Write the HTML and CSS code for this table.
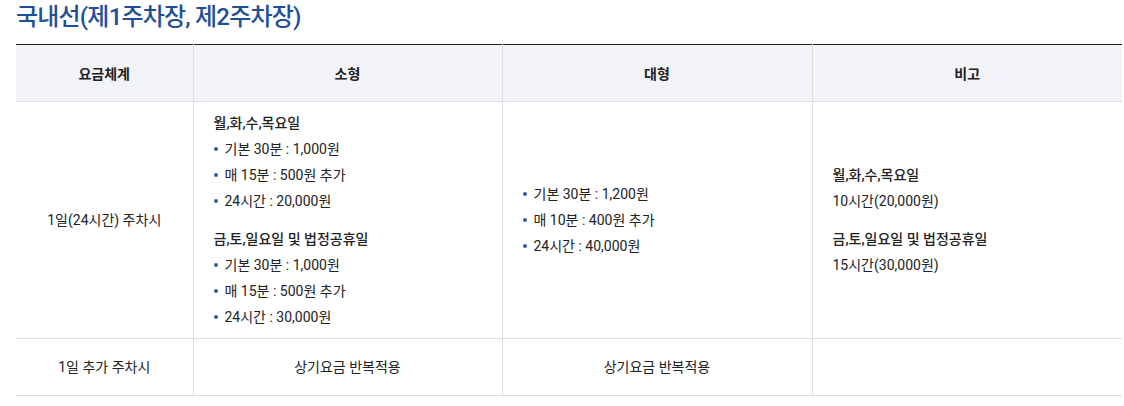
FILE: index.html
```html
<!DOCTYPE html>
<html lang="ko">
<head>
<meta charset="utf-8">
<link rel="stylesheet" href="styles.css">
</head>
<body>
<div class="page">
  <h2 class="title">국내선(제1주차장, 제2주차장)</h2>
  <table class="fee">
    <colgroup>
      <col class="c1"><col class="c2"><col class="c3"><col class="c4">
    </colgroup>
    <thead>
      <tr><th>요금체계</th><th>소형</th><th>대형</th><th>비고</th></tr>
    </thead>
    <tbody>
      <tr class="main">
        <td class="center">1일(24시간) 주차시</td>
        <td class="left">
          <p class="head">월,화,수,목요일</p>
          <ul class="dots">
            <li>기본 30분 : 1,000원</li>
            <li>매 15분 : 500원 추가</li>
            <li>24시간 : 20,000원</li>
          </ul>
          <p class="head gap">금,토,일요일 및 법정공휴일</p>
          <ul class="dots">
            <li>기본 30분 : 1,000원</li>
            <li>매 15분 : 500원 추가</li>
            <li>24시간 : 30,000원</li>
          </ul>
        </td>
        <td class="left">
          <ul class="dots">
            <li>기본 30분 : 1,200원</li>
            <li>매 10분 : 400원 추가</li>
            <li>24시간 : 40,000원</li>
          </ul>
        </td>
        <td class="left">
          <p class="head">월,화,수,목요일</p>
          <p>10시간(20,000원)</p>
          <p class="head gap">금,토,일요일 및 법정공휴일</p>
          <p>15시간(30,000원)</p>
        </td>
      </tr>
      <tr class="extra">
        <td class="center">1일 추가 주차시</td>
        <td class="center">상기요금 반복적용</td>
        <td class="center">상기요금 반복적용</td>
        <td class="center"></td>
      </tr>
    </tbody>
  </table>
</div>
</body>
</html>
```

FILE: styles.css
```css
html, body {
  margin: 0;
  padding: 0;
  background: #fff;
}
body {
  font-family: Roboto, "Noto Sans CJK KR", sans-serif;
  color: #222;
  font-size: 14px;
}
.page {
  padding: 0 2px 0 16px;
}
.title {
  margin: 0;
  padding-top: 3px;
  height: 41px;
  font-size: 24px;
  font-weight: 500;
  letter-spacing: -0.8px;
  line-height: 28px;
  color: #1f4f98;
}
.fee {
  width: 1106px;
  border-collapse: collapse;
  border-top: 1px solid #222;
  table-layout: fixed;
}
.c1 { width: 177px; }
.c2 { width: 309px; }
.c3 { width: 310px; }
.c4 { width: auto; }
.fee th {
  height: 56px;
  padding: 0;
  background: #f3f4f8;
  font-weight: 700;
  font-size: 14px;
  text-align: center;
  border-bottom: 1px solid #dcdde2;
  border-left: 1px solid #dcdde2;
}
.fee td {
  border-bottom: 1px solid #dcdde2;
  border-left: 1px solid #dcdde2;
  font-size: 14px;
  line-height: 26px;
  vertical-align: middle;
}
.fee th:first-child, .fee td:first-child { border-left: 0; }
.main td {
  height: 220px;
  padding: 8px 20px 8px 20px;
}
.extra td {
  height: 56px;
  padding: 0 20px;
}
.center { text-align: center; }
.left { text-align: left; }
.fee p { margin: 0; }
.head { font-weight: 500; }
.gap { margin-top: 12px !important; }
.dots {
  list-style: none;
  margin: 0;
  padding: 0;
}
.dots li {
  position: relative;
  padding-left: 11px;
}
.dots li::before {
  content: "";
  position: absolute;
  left: 0;
  top: 11px;
  width: 4px;
  height: 4px;
  border-radius: 50%;
  background: #2f5fa7;
}
```
